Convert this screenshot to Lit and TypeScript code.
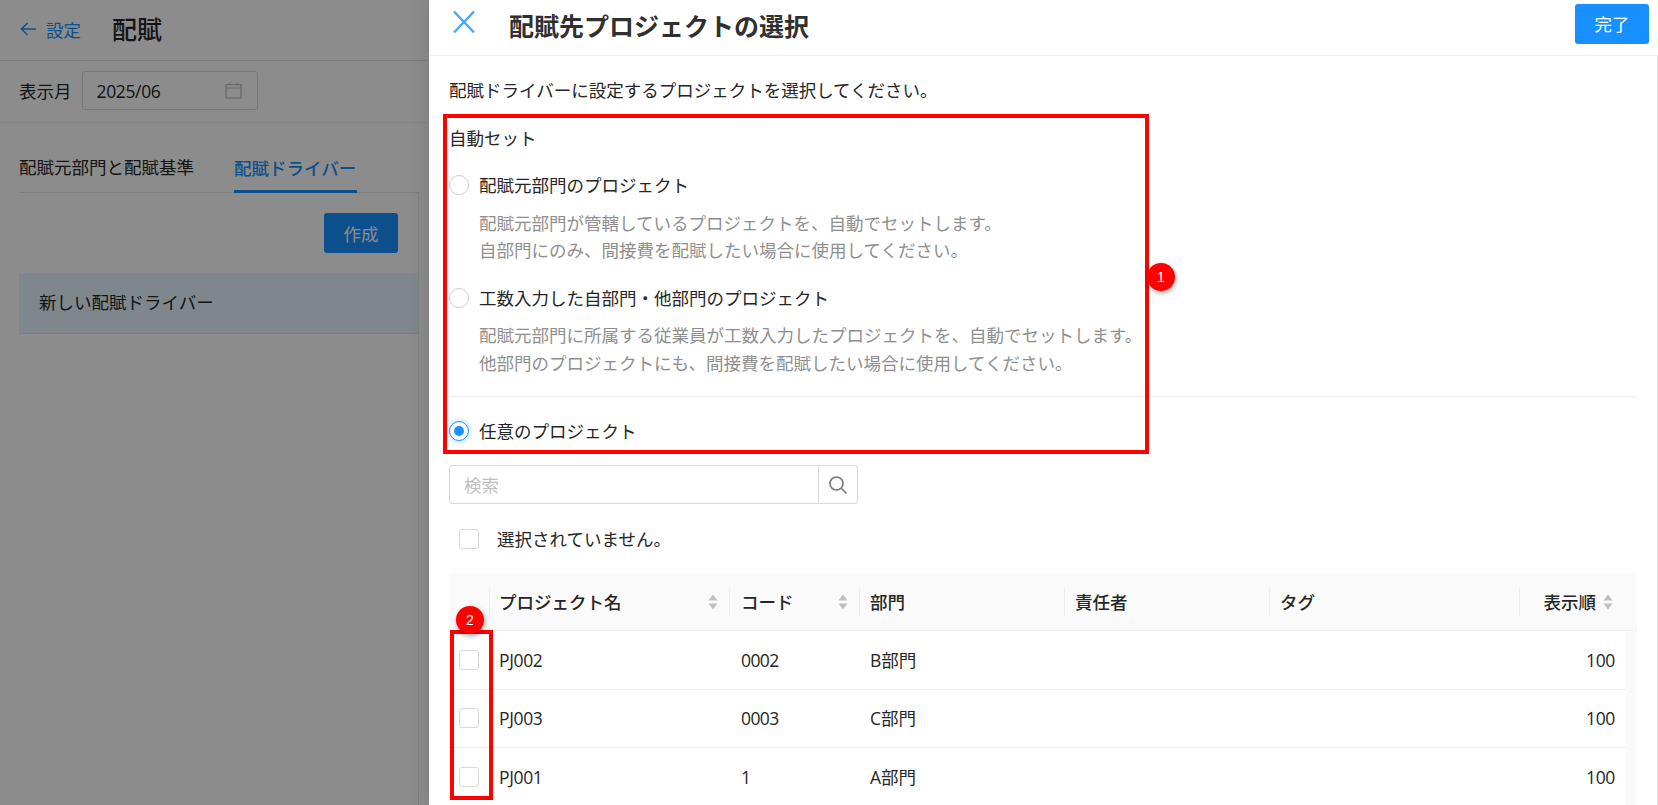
import { LitElement, html, css } from "lit";
import { customElement } from "lit/decorators.js";

const sortIcon = html`<svg class="sort" viewBox="0 0 12 20" width="12" height="20">
  <path d="M6 2.5 L10.5 8.5 H1.5 Z" fill="#bfbfbf"></path>
  <path d="M6 17.5 L10.5 11.5 H1.5 Z" fill="#bfbfbf"></path>
</svg>`;

const rows = [
  ["PJ002", "0002", "B部門", "100"],
  ["PJ003", "0003", "C部門", "100"],
  ["PJ001", "1", "A部門", "100"],
];

@customElement("app-root")
export class AppRoot extends LitElement {
  static styles = css`
    :host {
      display: block;
      position: relative;
      width: 1658px;
      height: 805px;
      overflow: hidden;
      background: #fff;
      color: #262626;
      font-family: "Open Sans", "Noto Sans CJK JP", sans-serif;
      font-size: 17.5px;
    }
    * { box-sizing: border-box; }

    /* Background page */
    .page { width: 429px; height: 805px; display: flex; flex-direction: column; }
    .top {
      height: 61px; display: flex; align-items: center; padding: 0 0 2px 20px;
      border-bottom: 1px solid #e0e0e0;
    }
    .back { display: flex; align-items: center; gap: 9px; color: #1890ff; font-size: 17.5px; width: 92px; }
    .page-title { font-size: 25px; font-weight: 500; line-height: 32px; }
    .filter {
      height: 62px; display: flex; align-items: center; padding: 0 0 2px 19px; gap: 10px;
      border-bottom: 1px solid #eee;
    }
    .date {
      width: 176px; height: 39px; border: 1px solid #d9d9d9; border-radius: 3px;
      display: flex; align-items: center; justify-content: space-between;
      padding: 0 15px 0 14px; font-size: 17.5px;
    }
    .lat { letter-spacing: -0.35px; }
    .content { margin: 0 10px 0 19px; flex: 1; display: flex; flex-direction: column; }
    .tabs {
      height: 70px; display: flex; align-items: flex-end; gap: 40px;
      border-bottom: 1px solid #e8e8e8;
    }
    .tab { height: 40px; line-height: 30px; white-space: nowrap; }
    .tab.active {
      color: #1890ff; font-weight: 500; border-bottom: 3px solid #1890ff; margin-bottom: -1px;
      padding-right: 1px;
    }
    .list { flex: 1; border-right: 1px solid #e8e8e8; }
    .actions { display: flex; justify-content: flex-end; padding: 20px 20px 20px 0; }
    .create {
      width: 74px; height: 40px; background: #1890ff; color: #fff; border-radius: 3px;
      display: flex; align-items: center; justify-content: center; font-size: 17.5px;
    }
    .item {
      height: 61px; background: #e6f7ff; display: flex; align-items: center; padding: 0 20px 4px;
      border-bottom: 1px solid #d5e6ee;
    }
    .overlay { position: absolute; inset: 0; background: rgba(0, 0, 0, 0.45); }

    /* Drawer */
    .drawer {
      position: absolute; top: 0; right: 0; bottom: 0; width: 1229px; background: #fff;
      box-shadow: -6px 0 16px rgba(0, 0, 0, 0.08); overflow: hidden;
    }
    .d-head {
      height: 56px; display: flex; align-items: center; padding: 0 9px 3px 23px;
      border-bottom: 1px solid #eee;
    }
    .close { width: 24px; height: 24px; margin: -8px 33px 0 0; display: block; }
    .d-title { font-size: 25px; font-weight: 700; color: #303030; flex: 1; line-height: 36px; }
    .done {
      width: 74px; height: 40px; margin-top: -5px; background: #1890ff; color: #fff; border-radius: 3px;
      display: flex; align-items: center; justify-content: center;
    }
    .d-body { padding: 22px 21px 0 20px; line-height: 26px; border-right: 1px solid #ddd; height: 749px; }
    .intro { margin-top: -1px; }
    .group { margin-top: 21.5px; }
    .radio-row { display: flex; align-items: center; gap: 10px; margin-top: 21px; }
    .radio-row.b { margin-top: 20.5px; }
    .radio-row.c { margin-top: 0; }
    .radio {
      width: 20px; height: 20px; border-radius: 50%; border: 1px solid #cfcfcf; background: #fff; flex: none;
    }
    .radio.on {
      border-color: #1890ff; display: flex; align-items: center; justify-content: center;
      box-shadow: 0 0 0 3px #e6f4ff;
    }
    .radio.on::after { content: ""; width: 10px; height: 10px; border-radius: 50%; background: #1890ff; }
    .hint { margin: 12px 0 0 30px; color: #8f8f8f; line-height: 27.5px; }
    .radio-row.b + .hint { margin-top: 11px; }
    .divider { height: 1px; background: #eee; margin: 19px 0 21px; }
    .search { display: flex; width: 409px; height: 39px; margin-top: 21px; }
    .search-input {
      flex: 1; border: 1px solid #d9d9d9; border-radius: 3px 0 0 3px; padding: 0 14px;
      color: #bfbfbf; display: flex; align-items: center;
    }
    .search-btn {
      width: 39px; border: 1px solid #d9d9d9; border-left: 0; border-radius: 0 3px 3px 0;
      display: flex; align-items: center; justify-content: center;
    }
    .selection { display: flex; align-items: center; margin: 22px 0 21px 10px; gap: 18px; }
    .check { width: 20px; height: 20px; border: 1px solid #d9d9d9; border-radius: 3px; background: #fff; flex: none; }

    .table { width: 1188px; background: #fafafa; height: 240px; }
    .t-head, .t-row { display: grid; grid-template-columns: 40px 240px 130px 205px 205px 249.5px 108.5px; }
    .t-head { height: 58px; align-items: center; border-bottom: 1px solid #eee; }
    .th {
      height: 28px; display: flex; align-items: center; justify-content: space-between;
      padding: 0 10px 0 9px; border-left: 1px solid #eee; font-weight: 500; white-space: nowrap;
    }
    .th.pad { padding-left: 10px; }
    .th.pad-code { padding-left: 11px; }
    .th.num { justify-content: flex-end; gap: 6px; padding-right: 13px; }
    .sort { flex: none; }
    .t-body { width: 1177px; background: #fff; }
    .t-row { height: 58.6px; align-items: center; border-bottom: 1px solid #eee; }
    .td { padding-left: 10px; white-space: nowrap; }
    .td.code { padding-left: 12px; letter-spacing: -0.6px; }
    .td.dept { padding-left: 11px; }
    .td.num { text-align: right; padding-right: 12px; }

    /* Annotations */
    .mark { position: absolute; border: 4px solid #f00; pointer-events: none; }
    .mark.one { left: 443px; top: 114px; width: 706px; height: 340px; }
    .mark.two { left: 450px; top: 630px; width: 43px; height: 170px; }
    .badge {
      position: absolute; width: 28px; height: 28px; border-radius: 50%; background: #f00; color: #fff;
      font: 400 14px/28px "Liberation Sans", sans-serif; text-align: center;
      box-shadow: 1px 2px 5px rgba(0, 0, 0, 0.35);
    }
    .badge.one { left: 1147px; top: 263px; }
    .badge.two { left: 456px; top: 606px; }
  `;

  render() {
    return html`
      <div class="page">
        <div class="top">
          <div class="back">
            <svg width="17" height="16" viewBox="0 0 17 16" fill="none" stroke="#1890ff" stroke-width="1.5">
              <path d="M16 8 H1.5 M7.5 2 L1.5 8 L7.5 14"></path>
            </svg>
            <span>設定</span>
          </div>
          <div class="page-title">配賦</div>
        </div>
        <div class="filter">
          <span>表示月</span>
          <div class="date">
            <span class="lat">2025/06</span>
            <svg width="17" height="17" viewBox="0 0 17 17" fill="none" stroke="#bfbfbf" stroke-width="1.2">
              <rect x="1" y="2.5" width="15" height="13.5"></rect>
              <path d="M1 6 H16 M5 0.5 V3.5 M12 0.5 V3.5"></path>
            </svg>
          </div>
        </div>
        <div class="content">
          <div class="tabs">
            <div class="tab">配賦元部門と配賦基準</div>
            <div class="tab active">配賦ドライバー</div>
          </div>
          <div class="list">
            <div class="actions"><div class="create">作成</div></div>
            <div class="item">新しい配賦ドライバー</div>
          </div>
        </div>
      </div>
      <div class="overlay"></div>

      <div class="drawer">
        <div class="d-head">
          <svg class="close" viewBox="0 0 24 24" fill="none" stroke="#40a9ff" stroke-width="2.4">
            <path d="M2 1.5 L22 22.5 M22 1.5 L2 22.5"></path>
          </svg>
          <div class="d-title">配賦先プロジェクトの選択</div>
          <div class="done">完了</div>
        </div>
        <div class="d-body">
          <div class="intro">配賦ドライバーに設定するプロジェクトを選択してください。</div>
          <div class="group">自動セット</div>
          <div class="radio-row"><span class="radio"></span><span>配賦元部門のプロジェクト</span></div>
          <div class="hint">配賦元部門が管轄しているプロジェクトを、自動でセットします。<br />自部門にのみ、間接費を配賦したい場合に使用してください。</div>
          <div class="radio-row b"><span class="radio"></span><span>工数入力した自部門・他部門のプロジェクト</span></div>
          <div class="hint">配賦元部門に所属する従業員が工数入力したプロジェクトを、自動でセットします。<br />他部門のプロジェクトにも、間接費を配賦したい場合に使用してください。</div>
          <div class="divider"></div>
          <div class="radio-row c"><span class="radio on"></span><span>任意のプロジェクト</span></div>
          <div class="search">
            <div class="search-input">検索</div>
            <div class="search-btn">
              <svg width="20" height="20" viewBox="0 0 20 20" fill="none" stroke="#7a7a7a" stroke-width="1.7">
                <circle cx="8.5" cy="8.5" r="6.5"></circle>
                <path d="M13.5 13.5 L18.5 18.5"></path>
              </svg>
            </div>
          </div>
          <div class="selection"><span class="check"></span><span>選択されていません。</span></div>
          <div class="table">
            <div class="t-head">
              <div></div>
              <div class="th"><span>プロジェクト名</span>${sortIcon}</div>
              <div class="th pad-code"><span>コード</span>${sortIcon}</div>
              <div class="th pad">部門</div>
              <div class="th pad">責任者</div>
              <div class="th pad">タグ</div>
              <div class="th num"><span>表示順</span>${sortIcon}</div>
            </div>
            <div class="t-body">
              ${rows.map(
                (r) => html`<div class="t-row">
                  <div class="td"><div class="check"></div></div>
                  <div class="td lat">${r[0]}</div>
                  <div class="td code">${r[1]}</div>
                  <div class="td dept">${r[2]}</div>
                  <div></div>
                  <div></div>
                  <div class="td num lat">${r[3]}</div>
                </div>`
              )}
            </div>
          </div>
        </div>
      </div>

      <div class="mark one"></div>
      <div class="mark two"></div>
      <div class="badge one">1</div>
      <div class="badge two">2</div>
    `;
  }
}
